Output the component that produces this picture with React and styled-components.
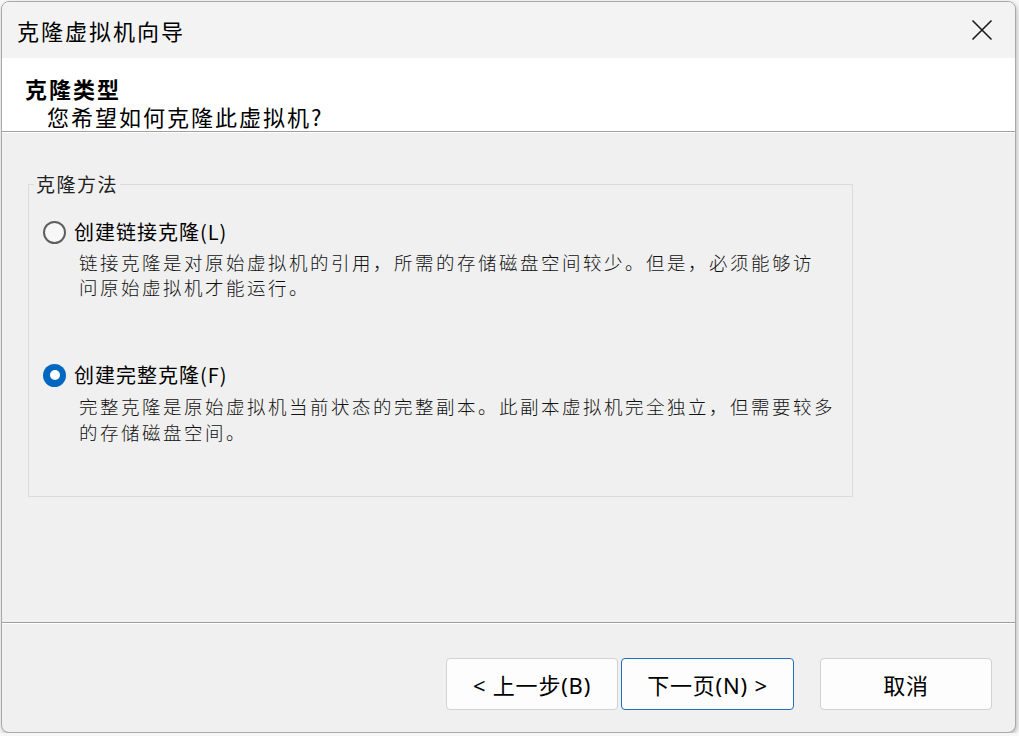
import React from "react";
import styled, { createGlobalStyle } from "styled-components";

const Global = createGlobalStyle`
  html, body { margin: 0; padding: 0; background: #f7f7f7; }
  body { font-family: "Noto Sans", "Noto Sans CJK SC", sans-serif; color: #000; }
  * { box-sizing: border-box; }
`;

const Window = styled.div`
  width: 1015px;
  height: 732px;
  margin: 1px 0 0 1px;
  border: 1px solid #a9a9a9;
  border-radius: 8px;
  overflow: hidden;
  background: #f0f0f0;
  box-shadow: 1px 2px 4px rgba(0, 0, 0, 0.25);
  display: flex;
  flex-direction: column;
`;

const TitleBar = styled.div`
  height: 56px;
  flex: none;
  display: flex;
  align-items: center;
  justify-content: space-between;
  padding: 0 18px 0 15px;
  background: #f3f3f3;
`;

const TitleText = styled.div`
  font-family: "Noto Sans CJK SC", sans-serif;
  font-size: 22px;
  letter-spacing: 2px;
  line-height: 30px;
`;

const CloseBtn = styled.div`
  width: 30px;
  height: 30px;
  display: flex;
  align-items: center;
  justify-content: center;
`;

const Header = styled.div`
  height: 74px;
  flex: none;
  background: #fff;
  border-bottom: 1px solid #a0a0a0;
  box-shadow: 0 1px 0 #ffffff;
  padding: 15px 0 0 23px;
`;

const HeaderTitle = styled.div`
  font-family: "Noto Sans CJK SC", sans-serif;
  font-weight: 700;
  font-size: 22px;
  letter-spacing: 2px;
  line-height: 30px;
`;

const HeaderSub = styled.div`
  font-family: "Noto Sans CJK SC", sans-serif;
  font-size: 22px;
  letter-spacing: 2px;
  line-height: 28px;
  padding-left: 22px;
  margin-top: -1px;
`;

const Body = styled.div`
  flex: 1;
  padding: 40px 0 0 26px;
`;

const Group = styled.fieldset`
  width: 825px;
  margin: 0;
  padding: 23px 0 51px 14px;
  border: 1px solid #dcdcdc;
  border-radius: 0;
`;

const Legend = styled.legend`
  font-family: "Noto Sans CJK SC", sans-serif;
  font-size: 19px;
  letter-spacing: 1.5px;
  line-height: 24px;
  color: #222;
  padding: 0 2px;
  margin-left: -9px;
`;

const Option = styled.div`
  margin-top: ${(p) => p.$gap}px;
`;

const RadioRow = styled.label`
  display: flex;
  align-items: center;
  height: 26px;
  gap: 8px;
`;

const RadioCircle = styled.span`
  width: 23px;
  height: 23px;
  border-radius: 50%;
  flex: none;
  display: flex;
  align-items: center;
  justify-content: center;
  border: ${(p) => (p.$checked ? "none" : "2px solid #5f5f5f")};
  background: ${(p) => (p.$checked ? "#0067c0" : "#f7f7f7")};
  &::after {
    content: "";
    display: ${(p) => (p.$checked ? "block" : "none")};
    width: 10px;
    height: 10px;
    border-radius: 50%;
    background: #fff;
  }
`;

const RadioLabel = styled.span`
  font-family: "Noto Sans CJK SC", sans-serif;
  font-size: 20px;
  letter-spacing: 1px;
  line-height: 26px;
`;

const Desc = styled.div`
  font-family: "Noto Sans CJK SC", sans-serif;
  font-size: 18.5px;
  font-weight: 300;
  letter-spacing: 2.5px;
  line-height: ${(p) => p.$lh}px;
  color: #111;
  margin: 5px 0 0 36px;
  white-space: nowrap;
`;

const Footer = styled.div`
  height: 110px;
  flex: none;
  border-top: 1px solid #a0a0a0;
  box-shadow: inset 0 1px 0 #fff;
  display: flex;
  justify-content: flex-end;
  align-items: flex-start;
  padding: 35px 23px 0 0;
`;

const Button = styled.button`
  width: ${(p) => p.$w}px;
  height: 52px;
  margin-left: ${(p) => p.$ml}px;
  border-radius: 4px;
  border: 1px solid ${(p) => (p.$primary ? "#1f6fc0" : "#d2d2d2")};
  background: #fdfdfd;
  font-family: "Noto Sans", "Noto Sans CJK SC", sans-serif;
  font-size: 22px;
  letter-spacing: 0.8px;
  color: #000;
  padding: 0;
  display: flex;
  align-items: center;
  justify-content: center;
`;

export default function App() {
  return (
    <>
      <Global />
      <Window>
        <TitleBar>
          <TitleText>克隆虚拟机向导</TitleText>
          <CloseBtn>
            <svg width="22" height="22" viewBox="0 0 22 22">
              <path d="M1.5 1.5 L20.5 20.5 M20.5 1.5 L1.5 20.5" stroke="#1a1a1a" strokeWidth="1.6" fill="none" />
            </svg>
          </CloseBtn>
        </TitleBar>
        <Header>
          <HeaderTitle>克隆类型</HeaderTitle>
          <HeaderSub>您希望如何克隆此虚拟机?</HeaderSub>
        </Header>
        <Body>
          <Group>
            <Legend>克隆方法</Legend>
            <Option $gap={0}>
              <RadioRow>
                <RadioCircle />
                <RadioLabel>创建链接克隆(L)</RadioLabel>
              </RadioRow>
              <Desc $lh={25}>
                链接克隆是对原始虚拟机的引用，所需的存储磁盘空间较少。但是，必须能够访
                <br />
                问原始虚拟机才能运行。
              </Desc>
            </Option>
            <Option $gap={62}>
              <RadioRow>
                <RadioCircle $checked />
                <RadioLabel>创建完整克隆(F)</RadioLabel>
              </RadioRow>
              <Desc $lh={26}>
                完整克隆是原始虚拟机当前状态的完整副本。此副本虚拟机完全独立，但需要较多
                <br />
                的存储磁盘空间。
              </Desc>
            </Option>
          </Group>
        </Body>
        <Footer>
          <Button $w={172} $ml={0}>&lt; 上一步(B)</Button>
          <Button $w={173} $ml={3} $primary>下一页(N) &gt;</Button>
          <Button $w={172} $ml={26}>取消</Button>
        </Footer>
      </Window>
    </>
  );
}
